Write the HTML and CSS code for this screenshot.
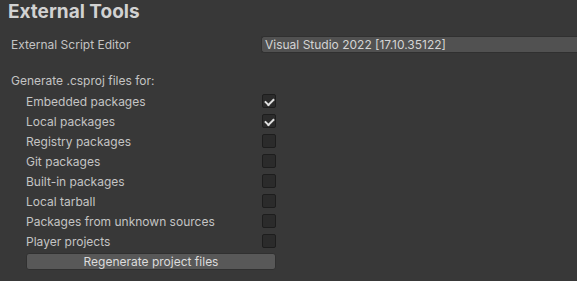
FILE: index.html
```html
<!DOCTYPE html>
<html lang="en">
<head>
    <meta charset="UTF-8">
    <meta name="viewport" content="width=device-width, initial-scale=1.0">
    <title>External Tools</title>
    <link rel="stylesheet" href="styles.css">
</head>
<body>
    <div class="panel">
        <h1>External Tools</h1>

        <div class="field-row">
            <span class="field-label">External Script Editor</span>
            <div class="dropdown">Visual Studio 2022 [17.10.35122]</div>
        </div>

        <div class="section-label">Generate .csproj files for:</div>

        <div class="toggle-list">
            <label class="toggle-row">
                <span class="toggle-label">Embedded packages</span>
                <span class="checkbox checked"></span>
            </label>
            <label class="toggle-row">
                <span class="toggle-label">Local packages</span>
                <span class="checkbox checked"></span>
            </label>
            <label class="toggle-row">
                <span class="toggle-label">Registry packages</span>
                <span class="checkbox"></span>
            </label>
            <label class="toggle-row">
                <span class="toggle-label">Git packages</span>
                <span class="checkbox"></span>
            </label>
            <label class="toggle-row">
                <span class="toggle-label">Built-in packages</span>
                <span class="checkbox"></span>
            </label>
            <label class="toggle-row">
                <span class="toggle-label">Local tarball</span>
                <span class="checkbox"></span>
            </label>
            <label class="toggle-row">
                <span class="toggle-label">Packages from unknown sources</span>
                <span class="checkbox"></span>
            </label>
            <label class="toggle-row">
                <span class="toggle-label">Player projects</span>
                <span class="checkbox"></span>
            </label>
        </div>

        <button class="regen-btn">Regenerate project files</button>
    </div>
</body>
</html>
```

FILE: styles.css
```css
* {
    margin: 0;
    padding: 0;
    box-sizing: border-box;
}

body {
    font-family: Inter, 'Noto Sans', sans-serif;
    font-size: 12px;
    background-color: #383838;
    color: #c4c4c4;
    width: 577px;
    height: 281px;
    overflow: hidden;
}

.panel {
    display: flex;
    flex-direction: column;
}

h1 {
    font-size: 19px;
    font-weight: 700;
    color: #d2d2d2;
    line-height: 24px;
    height: 24px;
    padding-left: 8px;
}

.field-row {
    display: flex;
    align-items: center;
    height: 20px;
    margin-top: 10px;
    padding-left: 11px;
}

.field-label {
    width: 250px;
    flex-shrink: 0;
}

.dropdown {
    flex: 1;
    height: 17px;
    line-height: 15px;
    padding-left: 3px;
    background-color: #515151;
    border: 1px solid #303030;
    border-right: none;
    border-radius: 3px 0 0 3px;
    color: #d4d4d4;
    white-space: nowrap;
}

.section-label {
    height: 20px;
    line-height: 20px;
    margin-top: 17px;
    padding-left: 11px;
}

.toggle-list {
    display: flex;
    flex-direction: column;
    padding-left: 26px;
}

.toggle-row {
    display: flex;
    align-items: center;
    height: 20px;
}

.toggle-label {
    width: 236px;
    flex-shrink: 0;
}

.checkbox {
    position: relative;
    width: 14px;
    height: 14px;
    background-color: #2b2b2b;
    border: 1px solid #1d1d1d;
    border-radius: 2px;
}

.checkbox.checked::after {
    content: '';
    position: absolute;
    left: 3px;
    top: 1px;
    width: 7px;
    height: 4px;
    border-left: 2px solid #e0e0e0;
    border-bottom: 2px solid #e0e0e0;
    transform: translate(-1px, 2px) rotate(-45deg);
}

.regen-btn {
    margin-top: 2px;
    margin-left: 26px;
    width: 250px;
    height: 17px;
    background-color: #585858;
    border: 1px solid #303030;
    border-radius: 3px;
    color: #dcdcdc;
    font-family: inherit;
    font-size: 12px;
    line-height: 15px;
}
```
